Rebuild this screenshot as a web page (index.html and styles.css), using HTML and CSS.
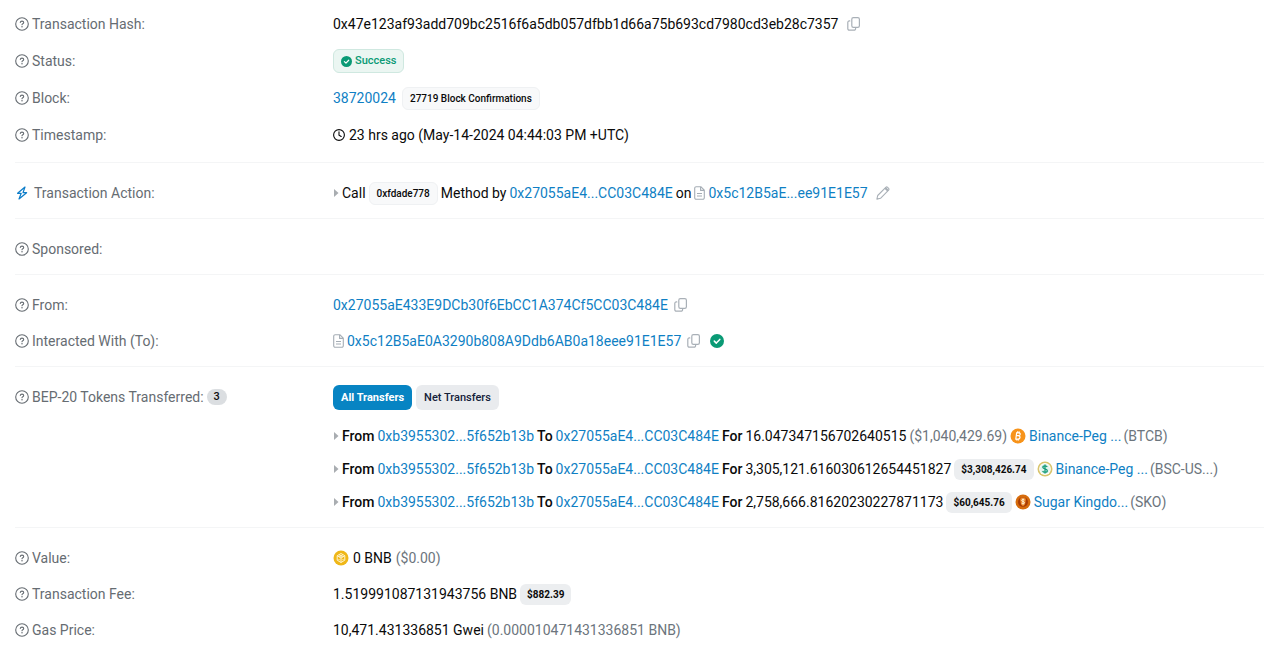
FILE: index.html
```html
<!DOCTYPE html>
<html lang="en">
<head>
<meta charset="utf-8">
<meta name="viewport" content="width=device-width, initial-scale=1">
<title>Transaction Details</title>
<link rel="stylesheet" href="styles.css">
</head>
<body>
<svg class="sprite" aria-hidden="true">
  <symbol id="help" viewBox="0 0 14 14"><circle cx="7" cy="7" r="6.3" fill="none" stroke="currentColor" stroke-width="1.1"/><path d="M5.300 5.400c.1-.9.800-1.300 1.700-1.300 1 0 1.700.5 1.700 1.300 0 .7-.4 1-.9 1.300-.5.300-.8.500-.8 1" fill="none" stroke="currentColor" stroke-width="1.100" stroke-linecap="round"/><circle cx="7" cy="9.700" r=".75" fill="currentColor"/></symbol>
  <symbol id="bolt" viewBox="0 0 14 14"><path d="M10 1 2.600 7.300h3.600L4 13l7.600-6.300H8z" fill="none" stroke="currentColor" stroke-width="1.2" stroke-linejoin="round"/></symbol>
  <symbol id="copy" viewBox="0 0 14 14"><rect x="4.800" y=".7" width="7.600" height="9.600" rx="1.600" fill="none" stroke="currentColor" stroke-width="1.200"/><path d="M2.800 3.900h-.5A1.500 1.500 0 0 0 .8 5.400v6.300a1.500 1.500 0 0 0 1.500 1.500h4.800a1.500 1.500 0 0 0 1.500-1.500v-.5" fill="none" stroke="currentColor" stroke-width="1.200" stroke-linecap="round"/></symbol>
  <symbol id="doc" viewBox="0 0 11 14"><path d="M2.200.7h4.600L10.300 4.200v7.600a1.500 1.500 0 0 1-1.500 1.500H2.200A1.500 1.500 0 0 1 .7 11.800V2.200A1.500 1.500 0 0 1 2.200.7z M6.600.9v3.500h3.500 M3 7.500h5 M3 10h5" fill="none" stroke="currentColor" stroke-width="1.100" stroke-linejoin="round"/></symbol>
  <symbol id="check" viewBox="0 0 14 14"><circle cx="7" cy="7" r="7" fill="currentColor"/><path d="M4.300 7.100l2 2 3.500-3.700" fill="none" stroke="#fff" stroke-width="1.500" stroke-linecap="round" stroke-linejoin="round"/></symbol>
  <symbol id="clock" viewBox="0 0 12 12"><circle cx="6" cy="6" r="5.400" fill="none" stroke="currentColor" stroke-width="1.100"/><path d="M6 2.800V6.100l2.200 1.400" fill="none" stroke="currentColor" stroke-width="1.100" stroke-linecap="round"/></symbol>
  <symbol id="caret" viewBox="0 0 6 8"><path d="M1 0 5.500 4 1 8z" fill="currentColor"/></symbol>
  <symbol id="pencil" viewBox="0 0 14 14"><path d="M.9 13.100l.8-3.600 8.100-8.100c.5-.5 1.300-.5 1.800 0l1 1c.5.5.5 1.300 0 1.800l-8.100 8.100z" fill="none" stroke="currentColor" stroke-width="1.100" stroke-linejoin="round"/><path d="M8.500 2.700l2.800 2.800 1.500-1.500-2.800-2.800z" fill="currentColor"/></symbol>
</svg>
<main class="details">
  <dl class="section section-wide">
    <div class="row">
      <dt class="label"><svg class="icon"><use href="#help"/></svg>Transaction Hash:</dt>
      <dd class="value">0x47e123af93add709bc2516f6a5db057dfbb1d66a75b693cd7980cd3eb28c7357<button class="tool" aria-label="Copy hash"><svg class="icon"><use href="#copy"/></svg></button></dd>
    </div>
    <div class="row">
      <dt class="label"><svg class="icon"><use href="#help"/></svg>Status:</dt>
      <dd class="value"><span class="badge success"><svg class="icon-tiny"><use href="#check"/></svg>Success</span></dd>
    </div>
    <div class="row">
      <dt class="label"><svg class="icon"><use href="#help"/></svg>Block:</dt>
      <dd class="value value-loose"><a href="#">38720024</a><span class="badge outline">27719 Block Confirmations</span></dd>
    </div>
    <div class="row">
      <dt class="label"><svg class="icon"><use href="#help"/></svg>Timestamp:</dt>
      <dd class="value"><svg class="icon-small"><use href="#clock"/></svg>23 hrs ago (May-14-2024 04:44:03 PM +UTC)</dd>
    </div>
  </dl>

  <dl class="section">
    <div class="row">
      <dt class="label label-action"><svg class="icon bolt"><use href="#bolt"/></svg>Transaction Action:</dt>
      <dd class="value value-tight"><svg class="caret"><use href="#caret"/></svg><span>Call</span><span class="badge outline">0xfdade778</span><span>Method by</span><a href="#">0x27055aE4...CC03C484E</a><span>on</span><svg class="icon-doc"><use href="#doc"/></svg><a href="#">0x5c12B5aE...ee91E1E57</a><button class="tool" aria-label="Edit note"><svg class="icon"><use href="#pencil"/></svg></button></dd>
    </div>
  </dl>

  <dl class="section">
    <div class="row">
      <dt class="label"><svg class="icon"><use href="#help"/></svg>Sponsored:</dt>
      <dd class="value"></dd>
    </div>
  </dl>

  <dl class="section">
    <div class="row">
      <dt class="label"><svg class="icon"><use href="#help"/></svg>From:</dt>
      <dd class="value value-tight"><a href="#">0x27055aE433E9DCb30f6EbCC1A374Cf5CC03C484E</a><button class="tool tool-near" aria-label="Copy address"><svg class="icon"><use href="#copy"/></svg></button></dd>
    </div>
    <div class="row">
      <dt class="label"><svg class="icon"><use href="#help"/></svg>Interacted With (To):</dt>
      <dd class="value value-tight"><svg class="icon-doc"><use href="#doc"/></svg><a href="#">0x5c12B5aE0A3290b808A9Ddb6AB0a18eee91E1E57</a><button class="tool tool-near" aria-label="Copy address"><svg class="icon"><use href="#copy"/></svg></button><svg class="icon verified"><use href="#check"/></svg></dd>
    </div>
  </dl>

  <dl class="section">
    <div class="row row-top">
      <dt class="label"><svg class="icon"><use href="#help"/></svg>BEP-20 Tokens Transferred: <span class="count">3</span></dt>
      <dd class="transfers">
        <div class="tabs">
          <button class="tab active">All Transfers</button>
          <button class="tab">Net Transfers</button>
        </div>
        <div class="value value-tight">
          <svg class="caret"><use href="#caret"/></svg><b>From</b><a href="#">0xb3955302...5f652b13b</a><b>To</b><a href="#">0x27055aE4...CC03C484E</a><b>For</b><span>16.047347156702640515</span><span class="muted">($1,040,429.69)</span>
          <svg class="coin" viewBox="0 0 16 16"><circle cx="8" cy="8" r="7.500" fill="#f7931a"/><path d="M6.700 4.500 5.800 11.200 M6 4.800h2.800c2 0 1.800 2.900-.2 2.900H6.400 M8.200 7.700c2.600 0 2.300 3.400-.1 3.400H5.200 M7.700 3.200v1.500 M9.300 3.400v1.400 M6.800 11v1.600 M8.400 11v1.600" fill="none" stroke="#fff" stroke-width="1.200"/></svg>
          <a href="#">Binance-Peg ...</a><span class="muted symbol">(BTCB)</span>
        </div>
        <div class="value value-tight">
          <svg class="caret"><use href="#caret"/></svg><b>From</b><a href="#">0xb3955302...5f652b13b</a><b>To</b><a href="#">0x27055aE4...CC03C484E</a><b>For</b><span>3,305,121.616030612654451827</span><span class="badge price">$3,308,426.74</span>
          <svg class="coin" viewBox="0 0 16 16"><circle cx="8" cy="8" r="7.500" fill="#d8c46c"/><circle cx="8" cy="8" r="5.900" fill="#fff"/><circle cx="8" cy="8" r="5" fill="#e2f4ee"/><path d="M10.200 6C9.800 5 9 4.800 8 4.800c-1.400 0-2.200.6-2.200 1.500 0 2.200 4.500 1.100 4.500 3.400 0 1-.9 1.600-2.300 1.600-1.200 0-2-.4-2.400-1.300 M8 3.500v9" fill="none" stroke="#169b78" stroke-width="1.300"/></svg>
          <a href="#">Binance-Peg ...</a><span class="muted symbol">(BSC-US...)</span>
        </div>
        <div class="value value-tight">
          <svg class="caret"><use href="#caret"/></svg><b>From</b><a href="#">0xb3955302...5f652b13b</a><b>To</b><a href="#">0x27055aE4...CC03C484E</a><b>For</b><span>2,758,666.81620230227871173</span><span class="badge price">$60,645.76</span>
          <svg class="coin" viewBox="0 0 16 16"><circle cx="8" cy="8" r="7.500" fill="#d66c0c"/><circle cx="8" cy="8" r="5" fill="#a83c05"/><path d="M6 3.500h4l1 2-1 5-2 2-2-2-1-5z" fill="#e98527"/><path d="M9.500 6c-.7-.8-2.800-.8-2.800.4 0 1.400 2.800.8 2.800 2.300 0 1.300-2.200 1.300-3 .4 M8 4.500v6" fill="none" stroke="#fff3d8" stroke-width="1"/></svg>
          <a href="#">Sugar Kingdo...</a><span class="muted symbol">(SKO)</span>
        </div>
      </dd>
    </div>
  </dl>

  <dl class="section">
    <div class="row">
      <dt class="label"><svg class="icon"><use href="#help"/></svg>Value:</dt>
      <dd class="value"><svg class="coin" viewBox="0 0 16 16"><circle cx="8" cy="8" r="7.500" fill="#efb718"/><path d="M8 3.500 11.800 5.700v4.500L8 12.500 4.200 10.200V5.700z M4.200 5.700 8 8l3.800-2.300 M8 8v4.500 M6 4.700l3.900 2.300 M10 4.700 6.100 7 M6 9v1.300 M10 9v1.300" fill="none" stroke="#fff3cd" stroke-width="1"/></svg><span>0 BNB</span><span class="muted">($0.00)</span></dd>
    </div>
    <div class="row">
      <dt class="label"><svg class="icon"><use href="#help"/></svg>Transaction Fee:</dt>
      <dd class="value value-tight"><span>1.519991087131943756 BNB</span><span class="badge price">$882.39</span></dd>
    </div>
    <div class="row">
      <dt class="label"><svg class="icon"><use href="#help"/></svg>Gas Price:</dt>
      <dd class="value value-tight"><span>10,471.431336851 Gwei</span><span class="muted">(0.000010471431336851 BNB)</span></dd>
    </div>
  </dl>
</main>
</body>
</html>
```
FILE: styles.css
```css
* { box-sizing: border-box; }

body {
  margin: 0;
  background: #fff;
  color: #0a0a0a;
  font: 14px/24px Roboto, "Liberation Sans", sans-serif;
}

.sprite { position: absolute; width: 0; height: 0; }

.details { padding: 0 16px 0 15px; }

.section {
  display: grid;
  gap: 12px;
  margin: 0;
  padding: 18px 0 13px;
  border-bottom: 1px solid #f4f5f6;
}

.section-wide { gap: 13px; padding: 12px 0 15px; }
.section:last-child { border-bottom: 0; }

.row {
  display: grid;
  grid-template-columns: 318px 1fr;
  align-items: center;
}

.row-top { align-items: start; }

.label {
  display: flex;
  align-items: center;
  gap: 3px;
  color: #666c72;
}

.label-action { gap: 5px; }

.value {
  display: flex;
  align-items: center;
  gap: 4px;
  min-height: 24px;
  margin: 0;
  white-space: nowrap;
}

.value-loose { gap: 6px; }
.value-tight { gap: 3px; }

a { color: #0f7fc4; text-decoration: none; }
b { font-weight: 500; }
svg { flex: none; }

.muted { color: #6c757d; }
.symbol { margin-left: -1px; }

.icon { display: block; width: 14px; height: 14px; }
.icon-small { width: 12px; height: 12px; }
.icon-tiny { width: 11px; height: 11px; }
.icon-doc { width: 11px; height: 14px; color: #a5adb5; }
.caret { width: 6px; height: 8px; color: #a9adb1; }
.coin { width: 16px; height: 16px; }
.bolt { color: #0d7dc9; }
.verified { margin-left: 6px; color: #0a9a75; }

.tool {
  margin-left: 5px;
  padding: 0;
  border: 0;
  background: none;
  color: #a9b0b7;
}

.tool-near { margin-left: 3px; }

.badge {
  display: inline-flex;
  align-items: center;
  gap: 3px;
  padding: 0 7px;
  border: 1px solid #eff1f3;
  border-radius: 6px;
  font-size: 10px;
  font-weight: 500;
  line-height: 21px;
}

.outline { background: #f8f9fa; }

.success {
  border-color: #cfe8e0;
  background: #ebf6f2;
  color: #0a9a75;
  font-size: 11px;
  line-height: 22px;
}

.price {
  border: 0;
  background: #eceef0;
  font-weight: 700;
}

.count {
  padding: 0 7px;
  border-radius: 8px;
  background: #dbdee1;
  color: #111;
  font-size: 11px;
  font-weight: 500;
  line-height: 16px;
}

.transfers { display: grid; gap: 9px; margin: 0; }

.tabs { display: flex; gap: 4px; margin-bottom: 5px; }

.tab {
  padding: 0 8px;
  border: 0;
  border-radius: 6px;
  background: #e9ebee;
  color: #14213a;
  font: 500 11px/25px Roboto, "Liberation Sans", sans-serif;
}

.tab.active { background: #0784c3; color: #fff; font-weight: 700; }
```
